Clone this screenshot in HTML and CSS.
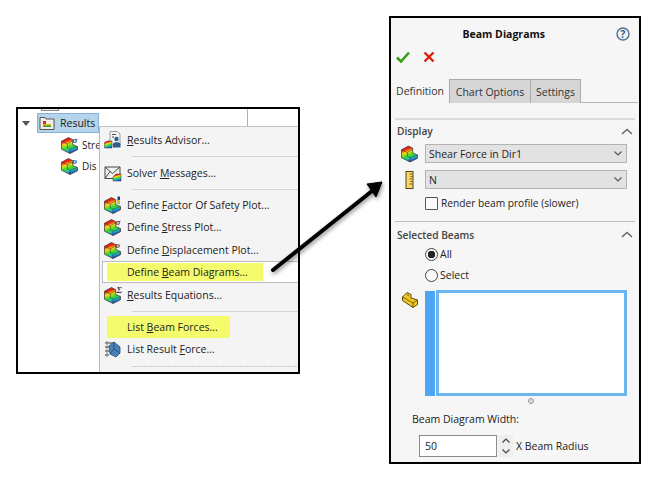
FILE: index.html
```html
<!DOCTYPE html>
<html lang="en">
<head>
    <meta charset="UTF-8">
    <meta name="viewport" content="width=device-width, initial-scale=1.0">
    <title>Beam Diagrams</title>
    <link rel="stylesheet" href="styles.css">
</head>
<body>
    <!-- shared icon parts -->
    <svg class="defs" width="0" height="0">
        <defs>
            <linearGradient id="rainbow" x1="0" y1="0" x2="0.35" y2="1">
                <stop offset="0.28" stop-color="#ee2214"/>
                <stop offset="0.45" stop-color="#fbd81c"/>
                <stop offset="0.68" stop-color="#3cd82c"/>
                <stop offset="0.85" stop-color="#1cc4b0"/>
                <stop offset="1" stop-color="#1a5ad8"/>
            </linearGradient>
            <symbol id="plot" viewBox="0 0 16 16">
                <path d="M.5 4 7 .5 11 2.500V7L15.500 9V12L8.500 15.500 .5 11.500Z" fill="url(#rainbow)" stroke="#40302c" stroke-width="0.700"/>
                <path d="M.5 4 6 6.500V10L8.500 11.500V15.500M6 6.500 11 3.500M8.500 11.500 15.500 9" fill="none" stroke="#40302c" stroke-width="0.500"/>
            </symbol>
        </defs>
    </svg>

    <div class="menu-shot">
        <div class="tree">
            <div class="tree-clip"></div>
            <div class="tree-root">
                <svg class="caret" width="8" height="5" viewBox="0 0 8 5"><path d="M0 0H8L4 5Z" fill="#555"/></svg>
                <div class="tree-selected">
                    <svg class="folder" width="16" height="16" viewBox="0 0 16 16">
                        <path d="M1 2.500H6L7 4H15V14.500H1Z" fill="#f0ede4" stroke="#5c5750"/>
                        <path d="M4 6V12H12V9H7V6Z" fill="#e8b520"/>
                        <path d="M4 6H7V9H4Z" fill="#d92a20"/>
                        <path d="M4 10.500H12V12H4Z" fill="#2b9c3c"/>
                    </svg>
                    <span>Results</span>
                </div>
            </div>
            <div class="tree-item">
                <svg class="icon" viewBox="0 0 18 18"><use href="#plot" width="17" height="17" y="1"/><text x="11.500" y="6.500" class="sup">σ</text></svg>
                <span>Stre</span>
            </div>
            <div class="tree-item">
                <svg class="icon" viewBox="0 0 18 18"><use href="#plot" width="17" height="17" y="1"/><text x="11.500" y="6.500" class="sup">υ</text></svg>
                <span>Dis</span>
            </div>
        </div>
        <div class="right-col">
            <div class="strip"><div class="strip-cell"></div></div>
            <ul class="menu">
                <li class="row">
                    <svg class="icon" viewBox="0 0 18 18">
                        <path d="M6 0.500H13.500L16 3V14H6Z" fill="#f1f1f1" stroke="#8a8a8a" stroke-width="0.800"/>
                        <path d="M8 3.500H12M8 6H10" stroke="#555"/>
                        <circle cx="12.500" cy="8" r="2.200" fill="#2d5f8a"/>
                        <path d="M9 16.500V13C9 10.500 16.500 10.500 16.500 13V16.500Z" fill="#2d5f8a"/>
                        <path d="M0.500 17V11.500L3.500 10H8V17Z" fill="url(#rainbow)" stroke="#40302c" stroke-width="0.500"/>
                    </svg>
                    <span><u>R</u>esults Advisor...</span>
                </li>
                <li class="sep"></li>
                <li class="row">
                    <svg class="icon" viewBox="0 0 18 18">
                        <path d="M1 3H16V14.500H1Z" fill="#f2f2f2" stroke="#444"/>
                        <path d="M1 3 8.500 9.500 16 3M1 14.500 6 7.500" fill="none" stroke="#444"/>
                        <path d="M9 17V13L12 10H17V17Z" fill="url(#rainbow)" stroke="#40302c" stroke-width="0.500"/>
                    </svg>
                    <span>Solver <u>M</u>essages...</span>
                </li>
                <li class="sep"></li>
                <li class="row">
                    <svg class="icon" viewBox="0 0 18 18"><use href="#plot" width="17" height="17" y="1"/><rect x="13.500" y="0.500" width="2.500" height="7" fill="#2a3f8c"/><rect x="13.500" y="4" width="2.500" height="3" fill="#e8c020"/></svg>
                    <span>Define <u>F</u>actor Of Safety Plot...</span>
                </li>
                <li class="row">
                    <svg class="icon" viewBox="0 0 18 18"><use href="#plot" width="17" height="17" y="1"/><text x="11.500" y="6.500" class="sup">σ</text></svg>
                    <span>Define <u>S</u>tress Plot...</span>
                </li>
                <li class="row">
                    <svg class="icon" viewBox="0 0 18 18"><use href="#plot" width="17" height="17" y="1"/><text x="11.500" y="6.500" class="sup">υ</text></svg>
                    <span>Define <u>D</u>isplacement Plot...</span>
                </li>
                <li class="row row-active">
                    <span class="mark mark-long">Define <u>B</u>eam Diagrams...</span>
                </li>
                <li class="row">
                    <svg class="icon" viewBox="0 0 18 18"><use href="#plot" width="17" height="17" y="1"/><text x="12.500" y="6.500" class="sup">Σ</text></svg>
                    <span><u>R</u>esults Equations...</span>
                </li>
                <li class="sep"></li>
                <li class="row row-mark">
                    <span class="mark mark-short">List <u>B</u>eam Forces...</span>
                </li>
                <li class="row">
                    <svg class="icon" viewBox="0 0 18 18">
                        <path d="M1 3H9M1 7H5M1 11H5M1 15H5" stroke="#333"/>
                        <path d="M3 1V17" stroke="#888"/>
                        <path d="M5 6 10 2 16 7V13L12 17 6 14Z" fill="#4a82b8" stroke="#23496e" stroke-width="0.800"/>
                        <path d="M10 2V9L16 13M10 9 6 14" fill="none" stroke="#23496e" stroke-width="0.800"/>
                    </svg>
                    <span>List Result <u>F</u>orce...</span>
                </li>
                <li class="sep sep-dotted"></li>
            </ul>
        </div>
    </div>

    <div class="panel">
        <div class="panel-title">
            <span>Beam Diagrams</span>
            <svg class="help" width="14" height="14" viewBox="0 0 14 14">
                <circle cx="7" cy="7" r="6" fill="#eef3f8" stroke="#50708c" stroke-width="1.400"/>
                <text x="7" y="10.500" class="help-q">?</text>
            </svg>
        </div>
        <div class="actions">
            <svg width="14" height="12" viewBox="0 0 14 12"><path d="M1 6.500 5 10.500 13 1.500" fill="none" stroke="#3a9c12" stroke-width="2.600"/></svg>
            <svg width="12" height="12" viewBox="0 0 12 12"><path d="M1.500 1.500 10.500 10.500M10.500 1.500 1.500 10.500" stroke="#e0200c" stroke-width="2.400"/></svg>
        </div>
        <div class="tabs">
            <div class="tab tab-on">Definition</div>
            <div class="tab tab-chart">Chart Options</div>
            <div class="tab tab-settings">Settings</div>
        </div>

        <section class="group group-display">
            <div class="group-head">
                <span>Display</span>
                <svg width="12" height="7" viewBox="0 0 12 7"><path d="M1 6 6 1.500 11 6" fill="none" stroke="#666" stroke-width="1.500"/></svg>
            </div>
            <div class="field">
                <svg class="field-icon" viewBox="0 0 16 16"><use href="#plot"/></svg>
                <div class="combo">
                    <span>Shear Force in Dir1</span>
                    <svg width="8" height="5" viewBox="0 0 8 5"><path d="M.5.500 4 4 7.500.500" fill="none" stroke="#555" stroke-width="1.100"/></svg>
                </div>
            </div>
            <div class="field">
                <svg class="field-icon" viewBox="0 0 16 18">
                    <rect x="4.500" y="0.500" width="7" height="17" fill="#f5d86a" stroke="#5a4212"/>
                    <path d="M8 3H11M9 5.500H11M8 8H11M9 10.500H11M8 13H11" stroke="#7a5a18"/>
                </svg>
                <div class="combo">
                    <span>N</span>
                    <svg width="8" height="5" viewBox="0 0 8 5"><path d="M.5.500 4 4 7.500.500" fill="none" stroke="#555" stroke-width="1.100"/></svg>
                </div>
            </div>
            <label class="check">
                <span class="box"></span>
                <span>Render beam profile (slower)</span>
            </label>
        </section>

        <section class="group group-beams">
            <div class="group-head">
                <span>Selected Beams</span>
                <svg width="12" height="7" viewBox="0 0 12 7"><path d="M1 6 6 1.500 11 6" fill="none" stroke="#666" stroke-width="1.500"/></svg>
            </div>
            <div class="radio-row"><span class="radio radio-on"></span><span>All</span></div>
            <div class="radio-row"><span class="radio"></span><span>Select</span></div>
            <div class="picker">
                <svg class="picker-icon" width="18" height="18" viewBox="0 0 18 18">
                    <path d="M1.500 6 6 1.500 10 3.500V7L16.500 9V13.500L12 16.500 1.500 9.500Z" fill="#f2c81e" stroke="#5a4a10"/>
                    <path d="M1.500 6 12 12V16.500M12 12 16.500 9M6 3.500 8 5" fill="none" stroke="#5a4a10" stroke-width="0.800"/>
                </svg>
                <div class="list-mark"></div>
                <div class="list-box"></div>
            </div>
            <div class="grip"></div>
            <div class="width-label">Beam Diagram Width:</div>
            <div class="width-row">
                <div class="num-input">50</div>
                <div class="spin">
                    <svg width="8" height="5" viewBox="0 0 8 5"><path d="M.5 4.500 4 1 7.500 4.500" fill="none" stroke="#444" stroke-width="1.200"/></svg>
                    <svg width="8" height="5" viewBox="0 0 8 5"><path d="M.5.500 4 4 7.500.500" fill="none" stroke="#444" stroke-width="1.200"/></svg>
                </div>
                <span>X Beam Radius</span>
            </div>
        </section>
    </div>

    <!-- callout arrow sits over both panels -->
    <svg class="arrow" width="656" height="485" viewBox="0 0 656 485">
        <path d="M273 270 372 191" stroke="#000" stroke-width="4" stroke-linecap="round"/>
        <path d="M382 182 367 184 376 197Z" fill="#000" stroke="#000" stroke-linejoin="round"/>
    </svg>
</body>
</html>
```
FILE: styles.css
```css
* {
    box-sizing: border-box;
}
body {
    margin: 0;
    width: 656px;
    height: 485px;
    overflow: hidden;
    background: #fff;
    color: #222;
    font-family: "Open Sans", sans-serif;
    font-size: 10.5px;
    display: flex;
    align-items: flex-start;
}
.defs {
    position: absolute;
}
.icon {
    width: 18px;
    height: 18px;
    flex: none;
}
.sup {
    font-family: "Liberation Serif", serif;
    font-style: italic;
    font-weight: 700;
    font-size: 9px;
    fill: #3a3a4a;
}
u {
    text-underline-offset: 1px;
}

/* left screenshot: tree and context menu */
.menu-shot {
    width: 284px;
    height: 267px;
    margin: 107px 0 0 16px;
    border: 2px solid #000;
    display: flex;
    background: #fff;
}
.tree {
    width: 81px;
    flex: none;
    overflow: hidden;
    white-space: nowrap;
}
.tree-clip {
    width: 18px;
    height: 2px;
    margin-left: 23px;
    border: 1px solid #888;
    border-top: 0;
    background: #eee;
}
.tree-root {
    display: flex;
    align-items: center;
    margin-top: 2px;
}
.caret {
    margin: 0 7px 0 4px;
}
.tree-selected {
    flex: 1;
    height: 20px;
    display: flex;
    align-items: center;
    gap: 5px;
    padding-left: 1px;
    background: #b5d3ea;
    border: 1px solid #86b4d8;
}
.tree-item {
    display: flex;
    align-items: center;
    gap: 3px;
    height: 21px;
    margin-left: 43px;
    font-size: 10px;
}
.tree-root + .tree-item {
    margin-top: 1px;
}
.right-col {
    flex: 1;
    display: flex;
    flex-direction: column;
}
.strip {
    height: 18px;
    border-bottom: 1px solid #c4c4c4;
    background: #fff;
}
.strip-cell {
    width: 149px;
    height: 100%;
    border-right: 1px solid #b0b0b0;
}
.menu {
    flex: 1;
    list-style: none;
    margin: 0;
    padding: 2px 0 0;
    background: #f4f4f4;
    border-left: 1px solid #b8b8b8;
}
.row {
    height: 22.4px;
    display: flex;
    align-items: center;
    gap: 5px;
    padding-left: 4px;
}
.row-active {
    padding-left: 4px;
    margin-left: 2px;
    border: 1px solid #bdbdbd;
    border-right: 0;
    background: #fff;
}
.row-mark {
    padding-left: 7px;
}
.sep {
    height: 1px;
    margin: 5px 0 4px 32px;
    background: #d4d4d4;
}
.sep-dotted {
    background: repeating-linear-gradient(90deg, #c8c8c8 0 2px, #eee 2px 3px);
}
.mark {
    display: block;
    white-space: pre;
    background: #f4fb6c;
}
.mark-long {
    width: 156px;
    height: 18px;
    line-height: 18px;
    padding-left: 20px;
}
.mark-short {
    width: 123px;
    height: 22px;
    line-height: 22px;
    padding-left: 20px;
}

/* right screenshot: property panel */
.panel {
    width: 252px;
    height: 448px;
    margin: 16px 0 0 89px;
    border: 2px solid #000;
    background: #f6f6f6;
    flex: none;
}
.panel-title {
    height: 30px;
    padding: 1px 9px 0 0;
    display: flex;
    align-items: center;
    justify-content: flex-end;
    gap: 71px;
    font-weight: 700;
    color: #111;
}
.actions {
    height: 31px;
    padding: 0 0 13px 5px;
    display: flex;
    align-items: center;
    gap: 13px;
}
.tabs {
    display: flex;
    height: 24px;
    border-bottom: 1px solid #b4b4b4;
    margin-right: 1px;
}
.tab {
    display: flex;
    align-items: center;
    justify-content: center;
    border: 1px solid #aaa;
    border-bottom: 0;
    background: #d6d6d6;
    margin-bottom: -1px;
    color: #333;
}
.tab-on {
    width: 59px;
    border-width: 0 1px 0 0;
    background: #f6f6f6;
}
.tab-chart {
    width: 81px;
    border-left: 0;
}
.tab-settings {
    width: 50px;
    border-left: 0;
}
.group {
    margin: 15px 4px 0;
    border-top: 2px solid #dcdcdc;
}
.group-display {
    height: 103px;
}
.group-beams {
    margin-top: 0;
    border-top-width: 1px;
    border-top-color: #bdbdbd;
}
.group-head {
    height: 24px;
    padding: 0 2px 2px;
    display: flex;
    align-items: center;
    justify-content: space-between;
    font-size: 10.2px;
    font-weight: 600;
    color: #444;
}
.group-beams .group-head {
    height: 21.5px;
    padding: 4px 2px 0;
}
.field {
    display: flex;
    align-items: center;
    height: 19px;
    margin-bottom: 7px;
}
.field-icon {
    width: 17px;
    height: 18px;
    margin: 0 7px 0 6px;
    flex: none;
}
.combo {
    width: 202px;
    height: 19px;
    padding: 0 4px 0 3px;
    display: flex;
    align-items: center;
    justify-content: space-between;
    background: #e2e2e2;
    border: 1px solid #b4b4b4;
}
.check {
    display: flex;
    align-items: center;
    gap: 3px;
    margin: 1px 0 0 30px;
    font-size: 10.2px;
}
.box {
    width: 13px;
    height: 13px;
    background: #fafafa;
    border: 1px solid #555;
    border-radius: 1px;
}
.radio-row {
    display: flex;
    align-items: center;
    gap: 2px;
    height: 21px;
    margin-left: 30px;
}
.radio {
    width: 13px;
    height: 13px;
    border: 1px solid #444;
    border-radius: 50%;
    background: #fafafa;
}
.radio-on {
    background: radial-gradient(circle, #222 0 3.500px, #fafafa 4px);
}
.picker {
    display: flex;
    align-items: flex-start;
    margin-top: 4.500px;
    height: 106px;
}
.picker-icon {
    margin: 1px 6px 0 6px;
    flex: none;
}
.list-mark {
    width: 10px;
    height: 105px;
    margin-top: 1px;
    background: #4ea5f4;
}
.list-box {
    width: 191px;
    height: 106px;
    margin-left: 1px;
    background: #fff;
    border: 3px solid #6cb6ee;
}
.grip {
    width: 6px;
    height: 6px;
    margin: 2px 0 0 133px;
    border: 1px solid #999;
    border-radius: 50%;
    background: #ddd;
}
.width-label {
    margin: 8px 0 0 17px;
    height: 14px;
    line-height: 14px;
}
.width-row {
    display: flex;
    align-items: center;
    margin: 9px 0 0 24px;
}
.num-input {
    width: 78px;
    height: 22px;
    line-height: 20px;
    padding-left: 5px;
    background: #fff;
    border: 1px solid #8c8c8c;
}
.spin {
    width: 15px;
    height: 22px;
    margin: 0 3px 0 1px;
    display: flex;
    flex-direction: column;
    align-items: center;
    justify-content: space-around;
    background: #efefef;
}
.help-q {
    font-family: "Open Sans", sans-serif;
    font-size: 10px;
    font-weight: 700;
    text-anchor: middle;
    fill: #3c5a76;
}

.arrow {
    position: absolute;
    left: 0;
    top: 0;
    filter: drop-shadow(1px 2px 2px rgba(0, 0, 0, 0.45));
    pointer-events: none;
}
```
